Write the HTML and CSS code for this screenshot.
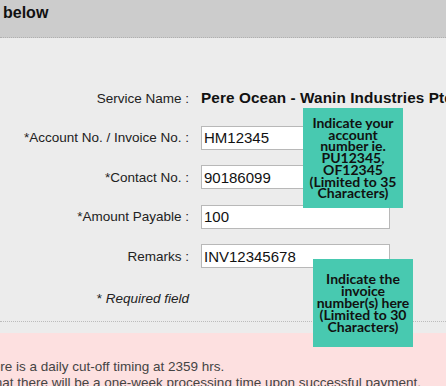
FILE: index.html
```html
<!DOCTYPE html>
<html lang="en">
<head>
    <meta charset="UTF-8">
    <meta name="viewport" content="width=device-width, initial-scale=1.0">
    <title>Payment Details</title>
    <link rel="stylesheet" href="styles.css">
</head>
<body>
    <header class="topbar">
        <h2>below</h2>
    </header>

    <main class="panel">
        <div class="form">
            <div class="row">
                <label>Service Name :</label>
                <span class="value">Pere Ocean - Wanin Industries Pte Ltd</span>
            </div>
            <div class="row">
                <label for="account">*Account No. / Invoice No. :</label>
                <input type="text" id="account" value="HM12345">
            </div>
            <div class="row">
                <label for="contact">*Contact No. :</label>
                <input type="text" id="contact" value="90186099">
            </div>
            <div class="row">
                <label for="amount">*Amount Payable :</label>
                <input type="text" id="amount" value="100">
            </div>
            <div class="row">
                <label for="remarks">Remarks :</label>
                <input type="text" id="remarks" value="INV12345678">
            </div>
        </div>
        <p class="required">* <em>Required field</em></p>

        <div class="tip tip-account">Indicate your account number ie. PU12345, OF12345 (Limited to 35 Characters)</div>
        <div class="tip tip-remarks">Indicate the invoice number(s) here (Limited to 30 Characters)</div>
    </main>

    <section class="notice">
        <p class="line-one">There is a daily cut-off timing at 2359 hrs.</p>
        <p class="line-two">that there will be a one-week processing time upon successful payment.</p>
    </section>
</body>
</html>
```

FILE: styles.css
```css
* { margin: 0; padding: 0; box-sizing: border-box; }
body {
    font-family: Arial, "Liberation Sans", sans-serif;
    font-size: 13.5px;
    background: #ececec;
    color: #222;
    overflow: hidden;
    position: relative;
}
.topbar {
    background: #cccccc; height: 38px; padding: 4px 3px 0; border-bottom: 1px dotted #b0b0b0;
}
.topbar h2 { font-size: 16px; font-weight: bold; color: #111; line-height: 18px; }
.panel { padding-top: 48px; border-bottom: 1px dotted #bcbcbc; padding-bottom: 14px; }
.form { display: grid; row-gap: 15.5px; }
.row {
    display: grid; grid-template-columns: 201px 1fr; align-items: center; height: 24px;
}
.row label { text-align: right; padding-right: 12px; white-space: nowrap; color: #222; }
.row .value { font-size: 15.3px; font-weight: bold; color: #111; white-space: nowrap; letter-spacing: 0.1px; }
.row input {
    width: 189px; height: 24px; border: 1px solid #b8b8b8; background: #fff;
    font-family: Arial, "Liberation Sans", sans-serif; font-size: 15px; color: #111; padding: 0 2px;
}
.required {
    width: 189px; text-align: right; margin-top: 23px; line-height: 16px; color: #222;
}
.tip {
    position: absolute; width: 100px; background: #48c9b0; color: #111;
    font-family: Lato, "Open Sans", sans-serif; font-weight: bold; font-size: 14px; line-height: 11.7px;
    text-align: center; display: flex; align-items: center; justify-content: center; padding: 0 4px;
}
.tip-account { left: 303px; top: 108px; height: 100px; }
.tip-remarks { left: 313px; top: 259px; height: 88px; line-height: 12.1px; padding: 0 2px; }
.notice {
    background: #fde0e0; margin-top: 11px; padding-top: 26px; height: 60px; color: #444; white-space: nowrap;
}
.notice p { line-height: 16px; }
.line-one { margin-left: -23px; }
.line-two { margin-left: -9px; }
```
